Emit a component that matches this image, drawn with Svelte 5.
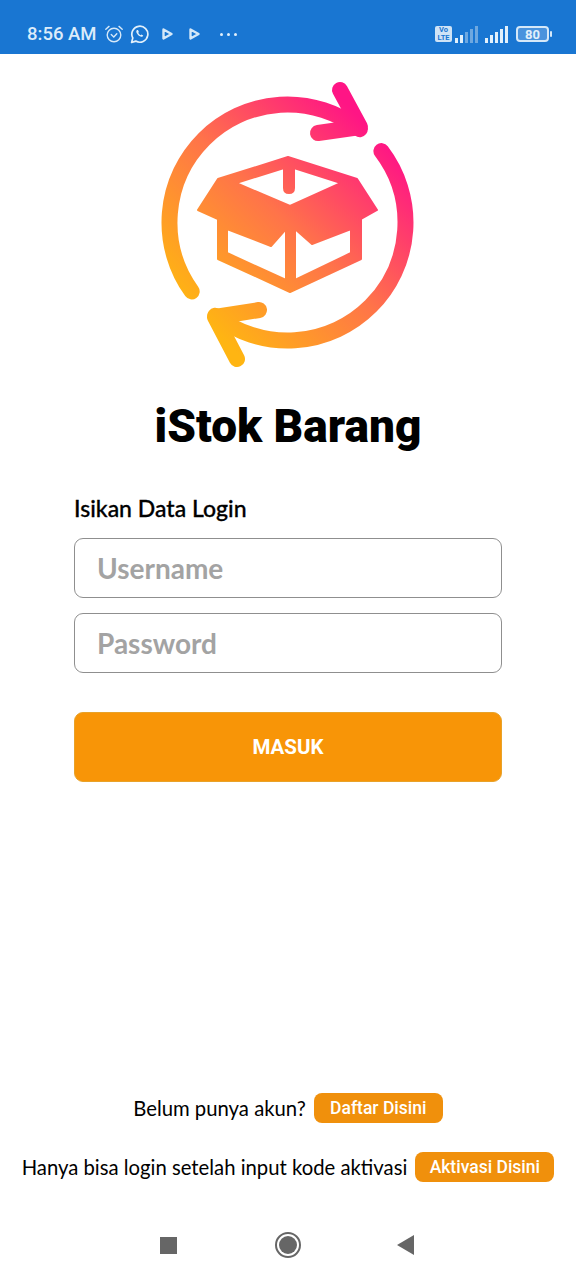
<script>
  const rightBars = [5, 8, 11, 14, 17];
</script>

<div class="screen">
  <header class="status">
    <div class="status-left">
      <span class="time">8:56 AM</span>
      <svg class="ico" width="20" height="20" viewBox="0 0 20 20" fill="none" stroke="#d5e8f8" stroke-width="1.4" stroke-linecap="round">
        <circle cx="10" cy="11" r="6.8" />
        <path d="M7.2 10.6 9.8 13l3-3.2" />
        <path d="M1.8 5.2 5 2.4M18.2 5.2 15 2.4" />
      </svg>
      <svg class="ico wa" width="20" height="20" viewBox="0 0 20 20" fill="none" stroke="#e2f0fb" stroke-width="1.7">
        <path d="M1.6 18.4l1.2-4.4a8 8 0 1 1 3 3.1z" stroke-linejoin="round" />
        <path d="M7 6c-1 .8-1 2 0 3.600 1 1.600 2.600 3 4.200 3.200 1 .1 1.800-.5 2-1.400l-1.800-1-.8.8c-1-.4-1.900-1.300-2.400-2.400l.7-.8-.9-2z" fill="#e2f0fb" stroke="none" />
      </svg>
      <svg class="ico play" width="11" height="12" viewBox="0 0 11 12" fill="none" stroke="#d5e8f8" stroke-width="2.400" stroke-linejoin="round">
        <path d="M1.500 1.500 9.500 6l-8 4.500z" />
      </svg>
      <svg class="ico play2" width="11" height="12" viewBox="0 0 11 12" fill="none" stroke="#d5e8f8" stroke-width="2.400" stroke-linejoin="round">
        <path d="M1.500 1.500 9.500 6l-8 4.500z" />
      </svg>
      <span class="dots"><i></i><i></i><i></i></span>
    </div>
    <div class="status-right">
      <span class="volte">Vo<br />LTE</span>
      <span class="bars dim">
        {#each rightBars as h, i}
          <i class:faded={i > 1} style="height:{h}px"></i>
        {/each}
      </span>
      <span class="bars">
        {#each rightBars as h}
          <i style="height:{h}px"></i>
        {/each}
      </span>
      <span class="battery"><b>80</b></span>
    </div>
  </header>

  <main class="main">
    <svg class="logo" width="280" height="310" viewBox="150 70 280 310" aria-label="iStok Barang logo">
      <defs>
        <linearGradient id="g" gradientUnits="userSpaceOnUse" x1="200" y1="318" x2="378" y2="135">
          <stop offset="0" stop-color="#ffb512" />
          <stop offset="0.5" stop-color="#ff7449" />
          <stop offset="1" stop-color="#ff1585" />
        </linearGradient>
      </defs>
      <g fill="none" stroke="url(#g)" stroke-width="16" stroke-linecap="round" stroke-linejoin="round">
        <path d="M191.700 291.400A118 118 0 0 1 204.060 139.060 118 118 0 0 1 359.800 129.200" />
        <path d="M340 90 360 127 318 133" />
        <path d="M381.400 151.100A118 118 0 0 1 370.940 305.940 118 118 0 0 1 215.200 315.800" />
        <path d="M259 310 215 317 237 359" />
      </g>
      <path
        fill="url(#g)"
        stroke="url(#g)"
        stroke-width="2"
        stroke-linejoin="round"
        fill-rule="evenodd"
        d="M288 157 357 179 377 210 361 219V259L290 292 218 259V219L198 210 218 179ZM236 183 284 168V188Q284 193 289 193 294 193 294 188V168L341 183 290 206ZM227 229V253L286 280V229L271 246ZM295 229V280L351 253V229L312 244Z"
      />
    </svg>

    <h1 class="title">iStok Barang</h1>

    <form class="form" onsubmit={(e) => e.preventDefault()}>
      <label class="label" for="username">Isikan Data Login</label>
      <input id="username" class="field" placeholder="Username" />
      <input class="field second" placeholder="Password" type="password" />
      <button class="submit" type="submit">MASUK</button>
    </form>

    <section class="links">
      <div class="row">
        <span>Belum punya akun?</span>
        <button class="pill daftar" type="button">Daftar Disini</button>
      </div>
      <div class="row">
        <span>Hanya bisa login setelah input kode aktivasi</span>
        <button class="pill aktivasi" type="button">Aktivasi Disini</button>
      </div>
    </section>
  </main>

  <nav class="nav">
    <span class="square"></span>
    <span class="home"><i></i></span>
    <svg class="back" width="20" height="22" viewBox="0 0 20 22"><path d="M18 1v20L1 11z" fill="#666" /></svg>
  </nav>
</div>

<style>
  :global(body) {
    margin: 0;
    background: #fff;
  }
  .screen {
    width: 576px;
    height: 1280px;
    display: flex;
    flex-direction: column;
    overflow: hidden;
    font-family: "Lato", "Liberation Sans", sans-serif;
    color: #000;
  }
  .status {
    height: 54px;
    flex: none;
    background: #1976d2;
    display: flex;
    align-items: center;
    justify-content: space-between;
    padding: 14px 27px 0 27px;
    box-sizing: border-box;
  }
  .status-left,
  .status-right {
    display: flex;
    align-items: center;
  }
  .time {
    font: 500 18.500px "Roboto", sans-serif;
    color: #dcecfa;
    margin-right: 8px;
  }
  .ico {
    display: block;
    flex: none;
  }
  .wa {
    margin-left: 6px;
  }
  .play {
    margin-left: 12px;
  }
  .play2 {
    margin-left: 16px;
  }
  .dots {
    display: flex;
    gap: 4px;
    margin-left: 20px;
  }
  .dots i {
    width: 3px;
    height: 3px;
    border-radius: 50%;
    background: #e2f0fb;
  }
  .volte {
    width: 17px;
    height: 16px;
    background: #cfe3f6;
    color: #1976d2;
    font: 700 7.500px/8px "Roboto", sans-serif;
    text-align: center;
    border-radius: 2px;
  }
  .bars {
    display: flex;
    align-items: flex-end;
    gap: 2px;
    height: 17px;
    margin-left: 3px;
  }
  .bars + .bars {
    margin-left: 7px;
  }
  .bars i {
    width: 3px;
    background: #e2f0fb;
  }
  .bars i.faded {
    background: #6ea8e0;
  }
  .battery {
    position: relative;
    width: 29px;
    height: 12px;
    margin-left: 8px;
    border: 2px solid #d5e8f8;
    border-radius: 4px;
    display: flex;
    align-items: center;
    justify-content: center;
    background: #4a93dd;
    box-sizing: content-box;
  }
  .battery::after {
    content: "";
    position: absolute;
    right: -5px;
    top: 3px;
    width: 2px;
    height: 6px;
    background: #d5e8f8;
    border-radius: 1px;
  }
  .battery b {
    font: 700 13px "Roboto", sans-serif;
    color: #e2f0fb;
  }
  .main {
    flex: 1;
    display: flex;
    flex-direction: column;
    align-items: center;
  }
  .logo {
    display: block;
    margin: 16px 0 0 4px;
    height: 310px;
    flex: none;
  }
  .title {
    margin: 18px 0 0;
    font-family: "Roboto", sans-serif;
    font-size: 46px;
    line-height: 56px;
    font-weight: 900;
  }
  .form {
    width: 428px;
    margin-top: 39px;
    display: flex;
    flex-direction: column;
  }
  .label {
    font-size: 23px;
    line-height: 30px;
    font-weight: 500;
    color: #000;
    -webkit-text-stroke: 0.3px #000;
  }
  .field {
    height: 60px;
    margin-top: 15px;
    box-sizing: border-box;
    border: 1.500px solid #8f8f8f;
    border-radius: 9px;
    padding: 0 22px;
    font: 700 28px "Lato", sans-serif;
    outline: none;
    background: #fff;
  }
  .field::placeholder {
    color: #a3a3a3;
    opacity: 1;
  }
  .submit {
    height: 70px;
    margin-top: 39px;
    border: 1px solid #e8a22a;
    border-radius: 9px;
    background: #f89507;
    color: #fff;
    font: 700 20.500px "Roboto", sans-serif;
  }
  .links {
    margin-top: 311px;
    display: flex;
    flex-direction: column;
    gap: 29px;
    align-items: center;
  }
  .row {
    display: flex;
    align-items: center;
    gap: 8px;
    font-size: 20.300px;
    height: 30px;
    white-space: nowrap;
  }
  .pill {
    height: 30px;
    border: 0;
    border-radius: 8px;
    background: #f0900c;
    color: #fff;
    font: 500 17.500px "Roboto", sans-serif;
    padding: 0;
  }
  .daftar {
    width: 129px;
  }
  .aktivasi {
    width: 139px;
  }
  .nav {
    height: 70px;
    flex: none;
    display: flex;
    align-items: center;
    padding-left: 160px;
    gap: 98px;
  }
  .square {
    width: 17px;
    height: 17px;
    background: #666;
  }
  .home {
    width: 26px;
    height: 26px;
    box-sizing: border-box;
    border: 2px solid #666;
    border-radius: 50%;
    display: flex;
    align-items: center;
    justify-content: center;
  }
  .home i {
    width: 18px;
    height: 18px;
    border-radius: 50%;
    background: #666;
  }
  .back {
    margin-left: -3px;
  }
</style>
